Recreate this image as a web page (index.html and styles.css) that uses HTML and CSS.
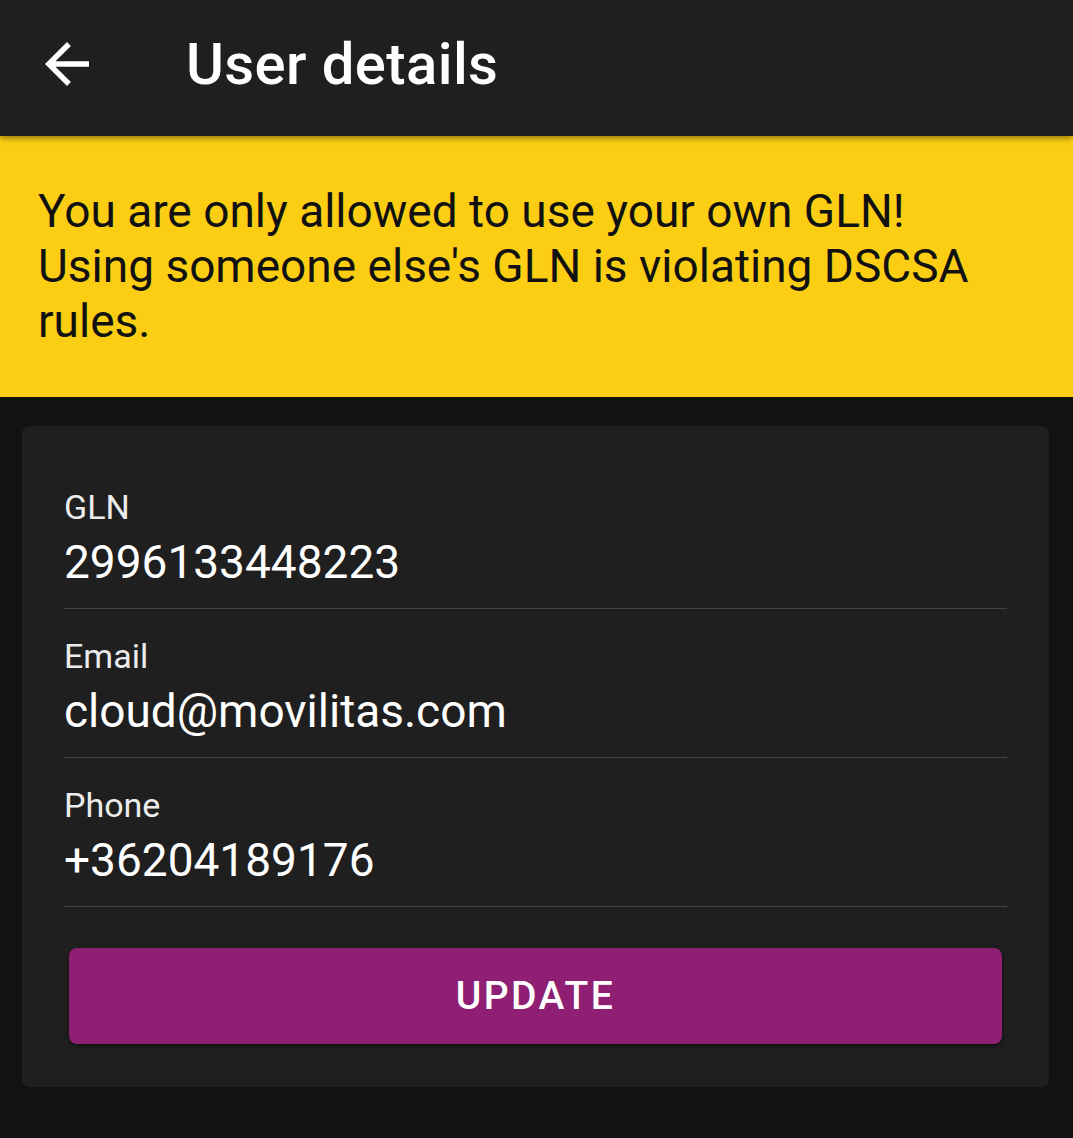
FILE: index.html
```html
<!DOCTYPE html>
<html lang="en">
<head>
    <meta charset="UTF-8">
    <title>User details</title>
    <link rel="stylesheet" href="styles.css">
</head>

<body>
<div class="topbar">
    <svg class="back" viewBox="0 0 24 24" width="66" height="66">
        <path d="M20 11H7.83l5.59-5.59L12 4l-8 8 8 8 1.41-1.41L7.83 13H20v-2z" fill="#fff"/>
    </svg>
    <span class="title">User details</span>
</div>

<div class="warning">
    You are only allowed to use your own GLN!<br>
    Using someone else's GLN is violating DSCSA rules.
</div>

<div class="card">
    <div class="row">
        <div class="label">GLN</div>
        <div class="value">2996133448223</div>
    </div>
    <div class="row">
        <div class="label">Email</div>
        <div class="value">cloud@movilitas.com</div>
    </div>
    <div class="row">
        <div class="label">Phone</div>
        <div class="value">+36204189176</div>
    </div>
    <button class="btn">UPDATE</button>
</div>
</body>
</html>
```

FILE: styles.css
```css
* {
    margin: 0;
    padding: 0;
    box-sizing: border-box;
}

body {
    background-color: #121212;
    font-family: Roboto, "Liberation Sans", sans-serif;
    color: #fff;
    min-height: 1138px;
}

.topbar {
    position: relative;
    z-index: 1;
    display: flex;
    align-items: center;
    height: 136px;
    padding: 0 0 8px 34px;
    background-color: #1f1f1f;
    box-shadow: 0 2px 6px rgba(0, 0, 0, 0.45);
}

.back {
    display: block;
}

.title {
    margin-left: 86px;
    font-size: 58px;
    font-weight: 500;
    letter-spacing: 0.4px;
}

.warning {
    background-color: #fbce14;
    color: #111;
    font-size: 46px;
    line-height: 55px;
    padding: 48px 30px 48px 38px;
    border-bottom: 3px solid #0e1109;
}

.card {
    width: 1027px;
    margin: 26px 0 0 22px;
    padding: 34px 42px 43px;
    background-color: #1f1f1f;
    border-radius: 8px;
}

.row {
    padding: 27px 0 20px;
    border-bottom: 1px solid #444;
}

.label {
    font-size: 34px;
    line-height: 40px;
    color: #ececec;
}

.value {
    margin-top: 9px;
    font-size: 46px;
    line-height: 52px;
}

.btn {
    display: block;
    width: calc(100% - 10px);
    height: 96px;
    margin: 41px 5px 0;
    border: none;
    border-radius: 8px;
    background-color: #8e1f72;
    color: #fff;
    font: 500 39px Roboto, "Liberation Sans", sans-serif;
    letter-spacing: 2.5px;
    box-shadow: 0 2px 4px rgba(0, 0, 0, 0.5);
}
```
